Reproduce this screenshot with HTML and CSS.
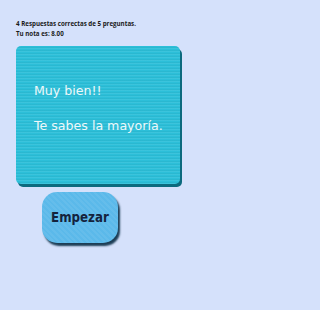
FILE: index.html
```html
<!DOCTYPE html>
<html lang="es">
<head>
<meta charset="utf-8">
<link rel="stylesheet" href="styles.css">
</head>
<body>
<div class="screen">
  <div class="summary">
    <p>4 Respuestas correctas de 5 preguntas.</p>
    <p>Tu nota es: 8.00</p>
  </div>
  <div class="card">
    <p>Muy bien!!</p>
    <p>Te sabes la mayoría.</p>
  </div>
  <button class="start">Empezar</button>
</div>
</body>
</html>
```
FILE: styles.css
```css
html, body {
  margin: 0;
  padding: 0;
  background: #d5e1fb;
}
.screen {
  width: 207px;
  height: 310px;
  display: flex;
  flex-direction: column;
  align-items: flex-start;
  padding: 19px 0 0 16px;
  box-sizing: border-box;
  font-family: "Open Sans", "DejaVu Sans", sans-serif;
}
.summary p {
  margin: 0;
  font-size: 6.2px;
  font-weight: bold;
  line-height: 9.5px;
  color: #1a1a1a;
}
.card {
  margin-top: 8px;
  width: 164px;
  height: 138px;
  box-sizing: border-box;
  border-radius: 5px;
  background-color: #2cbfd9;
  background-image: repeating-linear-gradient(0deg, rgba(255,255,255,0.07) 0 1px, rgba(0,0,0,0.04) 1px 2px, transparent 2px 3px);
  box-shadow: 2px 3px 0 #0c6a7e;
  padding: 37px 0 0 18px;
  color: #eef8fa;
  font-family: "DejaVu Sans", sans-serif;
  font-size: 12.6px;
}
.card p {
  margin: 0 0 19px 0;
  line-height: 16px;
}
.start {
  margin: 8px 0 0 26px;
  width: 76px;
  height: 51px;
  border: none;
  border-radius: 15px;
  background-color: #5bb9ea;
  background-image: repeating-linear-gradient(45deg, rgba(255,255,255,0.06) 0 2px, transparent 2px 4px);
  box-shadow: 2px 3px 2px #1c3d55;
  color: #14233d;
  font-family: "DejaVu Sans Condensed", "DejaVu Sans", sans-serif;
  font-stretch: condensed;
  font-weight: bold;
  font-size: 13.2px;
  padding: 0;
}
```
